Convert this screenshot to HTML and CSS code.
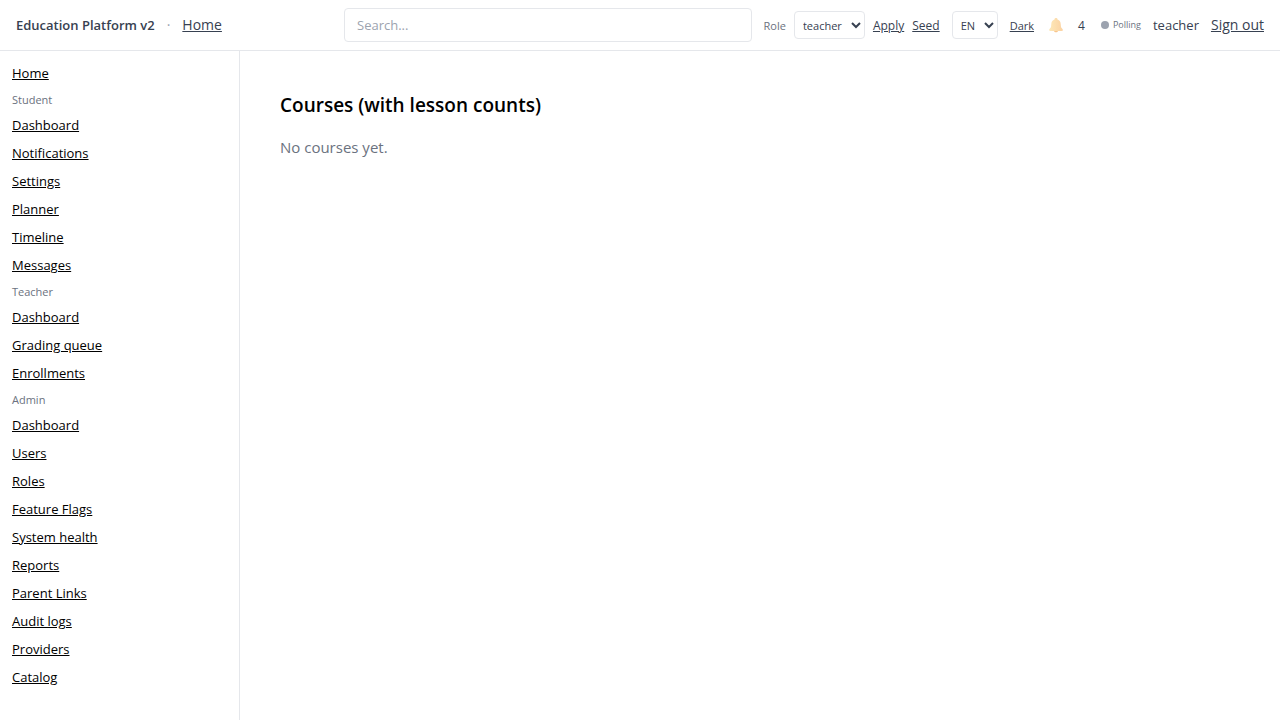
FILE: index.html
```html
<!DOCTYPE html>
<html lang="en">
<head>
<meta charset="utf-8">
<meta name="viewport" content="width=device-width, initial-scale=1">
<title>Education Platform v2</title>
<link rel="stylesheet" href="styles.css">
</head>
<body>
<header class="topbar">
  <div class="brand">
    <span class="brand-name">Education Platform v2</span>
    <span class="dot">·</span>
    <a href="#">Home</a>
  </div>
  <input class="search" type="search" placeholder="Search..." aria-label="Search">
  <div class="tools">
    <form class="role">
      <label for="role">Role</label>
      <select id="role" class="select select-role"><option>teacher</option><option>student</option><option>admin</option></select>
      <button type="button" class="link-button">Apply</button>
      <button type="button" class="link-button">Seed</button>
    </form>
    <select class="select select-lang" aria-label="Language"><option>EN</option><option>ES</option></select>
    <button type="button" class="link-button theme">Dark</button>
    <button type="button" class="bell" aria-label="Notifications">
      <svg width="16" height="16" viewBox="0 0 16 16" aria-hidden="true">
        <defs><linearGradient id="gold" x1="0" x2="1"><stop offset="0" stop-color="#fde8b8"/><stop offset="1" stop-color="#fbd2a2"/></linearGradient></defs>
        <path fill="url(#gold)" d="M8 1c1 0 1.500.6 1.500 1.400C11.700 3 12.600 4.800 12.700 7l.3 3c.2 1 1.900 2 1.900 3.100 0 .6-.5.900-1.200.9H2.300c-.7 0-1.200-.3-1.200-.9C1.100 12 2.800 11 3 10l.3-3c.1-2.200 1-4 3.200-4.600C6.500 1.600 7 1 8 1z"/>
        <path fill="#f8c58d" d="M6 14h4c-.2.800-1 1.300-2 1.300S6.200 14.800 6 14z"/>
      </svg>
    </button>
    <span class="count">4</span>
    <span class="status"><span class="status-dot"></span>Polling</span>
    <span>teacher</span>
    <a class="sign-out" href="#">Sign out</a>
  </div>
</header>
<div class="layout">
  <nav class="sidebar" aria-label="Main">
    <a href="#">Home</a>
    <h2>Student</h2>
    <a href="#">Dashboard</a>
    <a href="#">Notifications</a>
    <a href="#">Settings</a>
    <a href="#">Planner</a>
    <a href="#">Timeline</a>
    <a href="#">Messages</a>
    <h2>Teacher</h2>
    <a href="#">Dashboard</a>
    <a href="#">Grading queue</a>
    <a href="#">Enrollments</a>
    <h2>Admin</h2>
    <a href="#">Dashboard</a>
    <a href="#">Users</a>
    <a href="#">Roles</a>
    <a href="#">Feature Flags</a>
    <a href="#">System health</a>
    <a href="#">Reports</a>
    <a href="#">Parent Links</a>
    <a href="#">Audit logs</a>
    <a href="#">Providers</a>
    <a href="#">Catalog</a>
  </nav>
  <main class="content">
    <h1>Courses (with lesson counts)</h1>
    <p>No courses yet.</p>
  </main>
</div>
</body>
</html>
```
FILE: styles.css
```css
*, *::before, *::after { box-sizing: border-box; }
body {
  margin: 0;
  min-height: 100vh;
  display: flex;
  flex-direction: column;
  background: #fff;
  color: #000;
  font: 16px/24px "Segoe UI", "Open Sans", "Noto Sans", sans-serif;
}
a { color: inherit; text-underline-offset: 1px; }
button, input, select { font: inherit; color: inherit; }
.topbar {
  display: flex;
  align-items: center;
  gap: 12px;
  padding: 8px 16px;
  border-bottom: 1px solid #e5e7eb;
  color: #374151;
  font-size: 14px;
  line-height: 20px;
  white-space: nowrap;
}
.brand { flex: 0 0 316px; display: flex; align-items: center; gap: 12px; }
.brand-name { font-weight: 600; font-size: 13px; }
.dot { color: #9ca3af; }
.search {
  flex: 1 1 0;
  min-width: 0;
  height: 34px;
  padding: 0 12px;
  border: 1px solid #e5e7eb;
  border-radius: 4px;
  background: #fff;
  font-size: 13px;
  appearance: none;
}
.search::placeholder { color: #9ca3af; }
.tools { display: flex; align-items: center; gap: 12px; font-size: 13px; }
.role { display: flex; align-items: center; gap: 8px; margin: 0; font-size: 12px; }
.role label { padding-top: 2px; color: #6b7280; font-size: 11px; }
.select {
  height: 28px;
  padding: 0 4px;
  border: 1px solid #e5e7eb;
  border-radius: 4px;
  background: #fff;
  font-size: 11px;
}
.select-role { width: 71px; }
.select-lang { width: 46px; }
.link-button {
  padding: 2px 0 0;
  border: 0;
  background: none;
  font-size: 12px;
  text-decoration: underline;
  text-underline-offset: 1px;
}
.theme { font-size: 11px; }
.bell { display: flex; padding: 0 2px; border: 0; background: none; }
.count { padding-top: 2px; font-size: 12px; }
.status { display: flex; align-items: center; gap: 4px; margin-left: 4px; color: #6b7280; font-size: 9px; }
.status-dot { width: 8px; height: 8px; border-radius: 50%; background: #9ca3af; }
.sign-out { font-size: 14px; }
.layout { flex: 1; display: flex; }
.sidebar {
  flex: 0 0 240px;
  display: flex;
  flex-direction: column;
  align-items: flex-start;
  gap: 8px;
  padding: 12px;
  border-right: 1px solid #e5e7eb;
  font-size: 13px;
  line-height: 20px;
}
.sidebar h2 { margin: 0; padding-top: 2px; color: #6b7280; font-size: 11px; font-weight: 400; line-height: 14px; }
.content { flex: 1; padding: 40px; }
.content h1 { margin: 0 0 16px; font-size: 19px; font-weight: 600; line-height: 28px; }
.content p { margin: 0; color: #6b7280; font-size: 15px; }
```
